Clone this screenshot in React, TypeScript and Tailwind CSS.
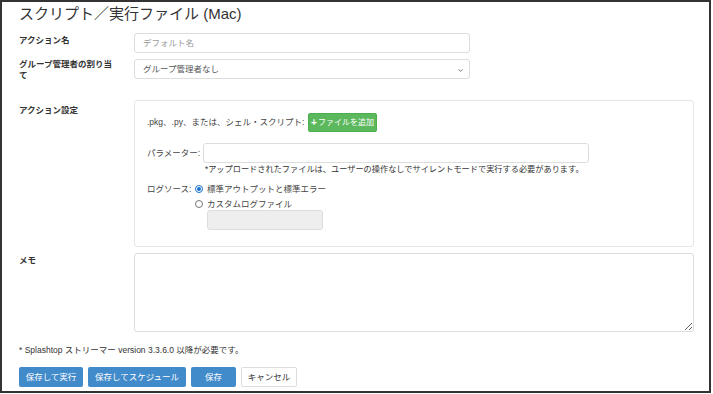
import { ChevronDown } from "lucide-react";

function Label({ children, pt }: { children: React.ReactNode; pt: string }) {
  return (
    <div className={`w-[115px] shrink-0 ${pt}`}>
      <div className="w-[98px] text-[8.5px] leading-[11px] font-bold text-[#333]">
        {children}
      </div>
    </div>
  );
}

function Radio({ checked }: { checked?: boolean }) {
  return checked ? (
    <span className="w-[8px] h-[8px] rounded-full border border-[#1a6fd0] flex items-center justify-center bg-white">
      <span className="w-[4px] h-[4px] rounded-full bg-[#1a6fd0]" />
    </span>
  ) : (
    <span className="w-[8px] h-[8px] rounded-full border border-[#777] bg-white" />
  );
}

export default function App() {
  return (
    <div className="w-[713px] h-[394px] bg-white font-['Liberation_Sans','Noto_Sans_CJK_JP',sans-serif] text-[#333]">
      <div className="w-[711px] h-[393px] border-2 border-[#333] pl-[17px]">
        <h1 className="mt-[2px] h-[20px] text-[15px] leading-[20px] text-[#333]">
          スクリプト／実行ファイル (Mac)
        </h1>

        {/* action name */}
        <div className="mt-[9px] flex">
          <Label pt="pt-[2px]">アクション名</Label>
          <input
            className="w-[336px] h-[20px] border border-[#ddd] rounded-[3px] px-[8px] text-[8.5px] placeholder:text-[#999] outline-none"
            placeholder="デフォルト名"
          />
        </div>

        {/* group admin */}
        <div className="mt-[6px] flex">
          <Label pt="pt-[0px]">グループ管理者の割り当て</Label>
          <div className="relative w-[336px] h-[20px] border border-[#ddd] rounded-[3px] px-[8px] flex items-center text-[8.5px] text-[#555]">
            グループ管理者なし
            <ChevronDown className="absolute right-[5px] top-[7px] w-[7px] h-[7px] text-[#666]" strokeWidth={3} />
          </div>
        </div>

        {/* action settings */}
        <div className="mt-[19px] flex">
          <Label pt="pt-[5px]">アクション設定</Label>
          <div className="w-[560px] h-[147px] border border-[#e6e6e6] rounded-[3px] pl-[12px] pt-[12px] text-[8.5px] leading-[11px] text-[#444]">
            <div className="flex items-center h-[19px]">
              <span className="w-[161px]">.pkg、.py、または、シェル・スクリプト:</span>
              <span className="h-[19px] w-[69px] rounded-[2px] bg-[#5cb85c] border border-[#4cae4c] text-white text-[8px] flex items-center justify-center gap-[1px]">
                <span className="font-bold text-[10px] leading-none">+</span>ファイルを追加
              </span>
            </div>
            <div className="mt-[11px] flex items-center">
              <span className="w-[56px]">パラメーター:</span>
              <input className="w-[386px] h-[20px] border border-[#ddd] rounded-[3px] outline-none" />
            </div>
            <div className="mt-[1px] pl-[58px] text-[8.2px] leading-[11px] text-[#333]">
              *アップロードされたファイルは、ユーザーの操作なしでサイレントモードで実行する必要があります。
            </div>
            <div className="mt-[8px] flex">
              <span className="w-[48px] leading-[12px]">ログソース:</span>
              <div className="flex flex-col">
                <div className="flex items-center gap-[4px] h-[12px]">
                  <Radio checked />
                  <span>標準アウトプットと標準エラー</span>
                </div>
                <div className="flex items-center gap-[4px] h-[12px] mt-[3px]">
                  <Radio />
                  <span>カスタムログファイル</span>
                </div>
                <div className="ml-[12px] w-[116px] h-[20px] bg-[#eee] border border-[#ddd] rounded-[3px]" />
              </div>
            </div>
          </div>
        </div>

        {/* memo */}
        <div className="mt-[6px] flex">
          <Label pt="pt-[2px]">メモ</Label>
          <textarea className="w-[560px] h-[79px] border border-[#ddd] rounded-[3px] outline-none" />
        </div>

        <div className="mt-[13px] text-[8.5px] leading-[11px] text-[#333]">
          * Splashtop ストリーマー version 3.3.6.0 以降が必要です。
        </div>

        <div className="mt-[11px] flex gap-[5px] text-[8.5px]">
          <button className="h-[20px] w-[64px] rounded-[2px] bg-[#428bca] text-white">保存して実行</button>
          <button className="h-[20px] w-[98px] rounded-[2px] bg-[#428bca] text-white">保存してスケジュール</button>
          <button className="h-[20px] w-[45px] rounded-[2px] bg-[#428bca] text-white">保存</button>
          <button className="h-[20px] w-[56px] rounded-[2px] bg-white border border-[#ddd] text-[#333]">キャンセル</button>
        </div>
      </div>
    </div>
  );
}
